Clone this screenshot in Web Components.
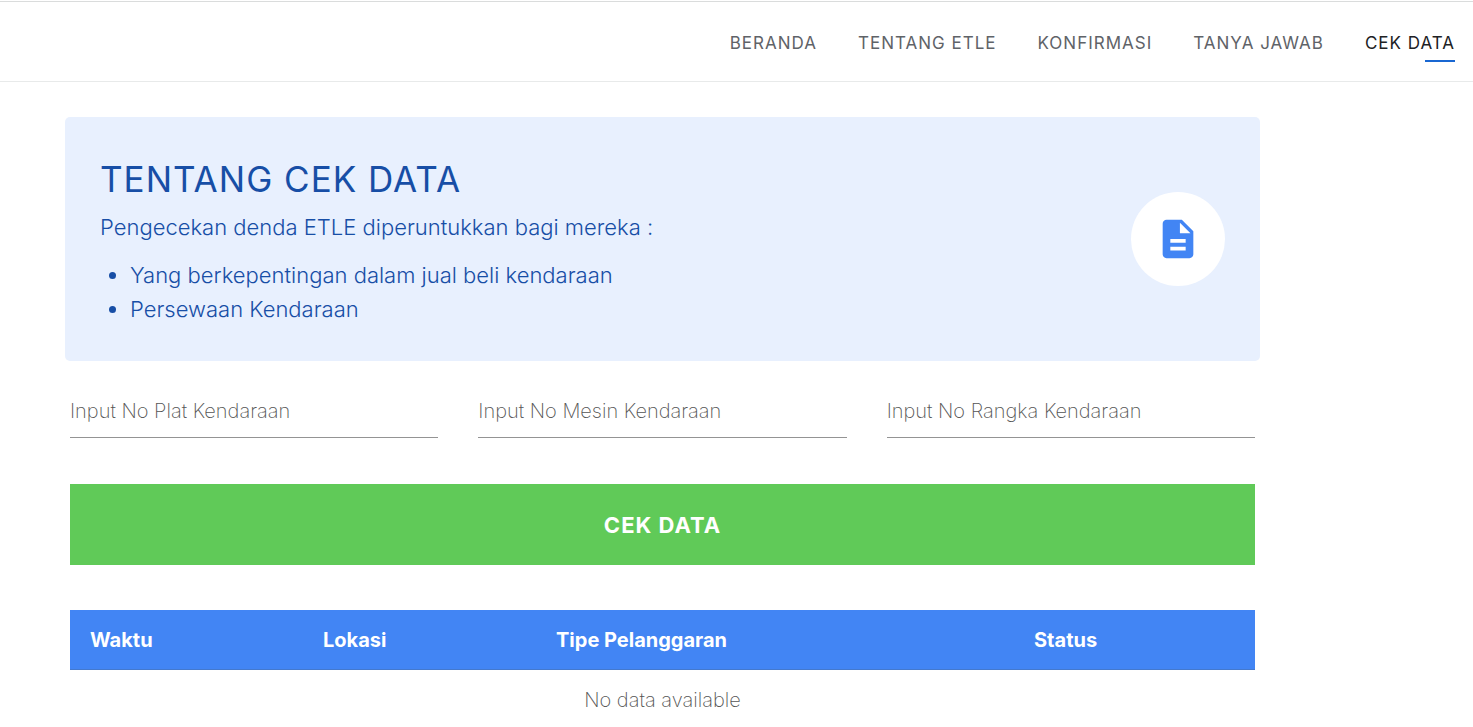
<!DOCTYPE html>
<html lang="id">
<head>
<meta charset="utf-8">
<meta name="viewport" content="width=device-width, initial-scale=1">
<title>Cek Data - ETLE</title>
<style>
  body { margin: 0; background: #fff; color: #5f6368; font-family: Inter, "Liberation Sans", sans-serif; font-weight: 300; }
</style>
</head>
<body>
<etle-page></etle-page>
<script>
const define = (name, html) => customElements.define(name, class extends HTMLElement {
  constructor() {
    super();
    this.attachShadow({ mode: 'open' }).innerHTML = html;
  }
});

define('etle-nav', `
  <style>
    :host { display: block; margin-top: 1px; border-top: 1px solid #dadcdc; border-bottom: 1px solid #e8eaea; }
    nav { display: flex; justify-content: flex-end; flex-wrap: wrap; gap: 0 41px; padding: 25px 18px 19px; }
  </style>
  <nav aria-label="Menu utama"><slot></slot></nav>`);

customElements.define('etle-nav-link', class extends HTMLElement {
  connectedCallback() {
    if (this.shadowRoot) return;
    this.attachShadow({ mode: 'open' }).innerHTML = `
      <style>
        :host { display: block; }
        a { display: block; color: #5f6368; font-size: 17px; line-height: 33px; font-weight: 400; letter-spacing: 1px; text-decoration: none; white-space: nowrap; }
        a::after { content: ""; display: block; width: 30px; height: 2px; margin-left: auto; }
        :host([active]) a { color: #202124; }
        :host([active]) a::after { background: #1967d2; }
      </style>
      <a href="${this.getAttribute('href')}"><slot></slot></a>`;
  }
});

define('etle-banner', `
  <style>
    :host { display: flex; align-items: center; justify-content: space-between; gap: 20px; padding: 35px; background: #e8f0fe; border-radius: 5px; color: #174ea6; font-size: 22px; line-height: 34px; }
    h1 { margin: 0 0 4px; font-size: 35px; line-height: 54px; font-weight: 400; letter-spacing: 1px; }
    .badge { flex: none; display: grid; place-items: center; width: 94px; height: 94px; border-radius: 50%; background: #fff; }
    svg { display: block; width: 46px; height: 46px; fill: #4285f4; }
  </style>
  <div><h1><slot name="title"></slot></h1><slot></slot></div>
  <div class="badge"><svg viewBox="0 0 24 24" aria-hidden="true"><path d="M14 2H6c-1.100 0-1.990.900-1.990 2L4 20c0 1.100.890 2 1.990 2H18c1.100 0 2-.900 2-2V8l-6-6zm2 16H8v-2h8v2zm0-4H8v-2h8v2zm-3-5V3.500L18.500 9H13z"/></svg></div>`);

define('etle-audience', `
  <style>
    p { margin: 0; }
    ul { margin: 14px 0 0; padding-left: 30px; }
  </style>
  <p>Pengecekan denda ETLE diperuntukkan bagi mereka :</p>
  <ul><li>Yang berkepentingan dalam jual beli kendaraan</li><li>Persewaan Kendaraan</li></ul>`);

customElements.define('etle-field', class extends HTMLElement {
  connectedCallback() {
    if (this.shadowRoot) return;
    const label = this.getAttribute('label');
    this.attachShadow({ mode: 'open' }).innerHTML = `
      <style>
        :host { display: block; min-width: 0; }
        input { display: block; box-sizing: border-box; width: 100%; height: 52px; margin: 0; padding: 0 0 2px; border: 0; border-bottom: 1px solid #949494; border-radius: 0; background: none; color: #202124; font: inherit; font-size: 20px; font-weight: 200; outline-offset: 2px; }
        input::placeholder { color: #555; opacity: 1; }
      </style>
      <input type="text" aria-label="${label}" placeholder="${label}">`;
  }
});

define('etle-search', `
  <style>
    :host { display: block; }
    .fields { display: grid; grid-template-columns: repeat(3, 1fr); gap: 40px; }
    button { display: block; width: 100%; margin: 46px 0 0; padding: 25px 24px 23px; border: 0; background: #60ca58; color: #fff; font: inherit; font-size: 22px; line-height: 33px; font-weight: 700; letter-spacing: 1px; cursor: pointer; }
  </style>
  <form>
    <div class="fields">
      <etle-field label="Input No Plat Kendaraan"></etle-field>
      <etle-field label="Input No Mesin Kendaraan"></etle-field>
      <etle-field label="Input No Rangka Kendaraan"></etle-field>
    </div>
    <button type="button">CEK DATA</button>
  </form>`);

define('etle-results', `
  <style>
    :host { display: block; }
    table { width: 100%; table-layout: fixed; border-collapse: separate; border-spacing: 0; font-size: 20px; line-height: 28px; }
    .side { width: 233px; }
    .status { width: 241px; }
    th { padding: 16px 20px 15px; background: #4285f4; border-bottom: 1px solid #4479cd; color: #fff; text-align: left; font-weight: 700; white-space: nowrap; }
    td { padding: 16px 20px 12px; text-align: center; color: #555; font-weight: 200; }
  </style>
  <table>
    <colgroup><col class="side"><col class="side"><col><col class="status"></colgroup>
    <thead><tr><th scope="col">Waktu</th><th scope="col">Lokasi</th><th scope="col">Tipe Pelanggaran</th><th scope="col">Status</th></tr></thead>
    <tbody><tr><td colspan="4">No data available</td></tr></tbody>
  </table>`);

define('etle-page', `
  <style>
    :host { display: block; }
    main { margin: 35px 213px 0 65px; }
    etle-search { margin: 25px 5px 0; }
    etle-results { margin: 45px 5px 0; }
  </style>
  <header><etle-nav>
    <etle-nav-link href="#beranda">BERANDA</etle-nav-link>
    <etle-nav-link href="#tentang">TENTANG ETLE</etle-nav-link>
    <etle-nav-link href="#konfirmasi">KONFIRMASI</etle-nav-link>
    <etle-nav-link href="#tanya">TANYA JAWAB</etle-nav-link>
    <etle-nav-link href="#cek" active>CEK DATA</etle-nav-link>
  </etle-nav></header>
  <main>
    <etle-banner><span slot="title">TENTANG CEK DATA</span><etle-audience></etle-audience></etle-banner>
    <etle-search></etle-search>
    <etle-results></etle-results>
  </main>`);
</script>
</body>
</html>
